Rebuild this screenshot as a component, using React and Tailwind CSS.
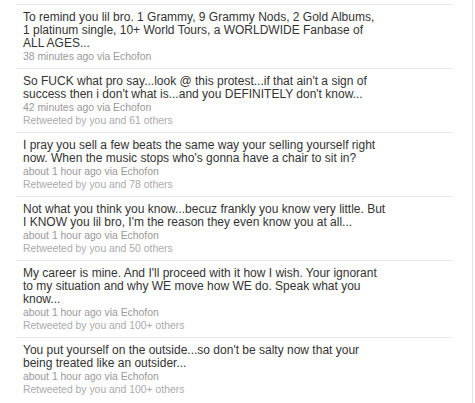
const tweets = [
  {
    lines: [
      'To remind you lil bro. 1 Grammy, 9 Grammy Nods, 2 Gold Albums,',
      '1 platinum single, 10+ World Tours, a WORLDWIDE Fanbase of',
      'ALL AGES...',
    ],
    meta: '38 minutes ago via Echofon',
  },
  {
    lines: [
      "So FUCK what pro say...look @ this protest...if that ain't a sign of",
      "success then i don't what is...and you DEFINITELY don't know...",
    ],
    meta: '42 minutes ago via Echofon',
    rt: 'Retweeted by you and 61 others',
  },
  {
    lines: [
      'I pray you sell a few beats the same way your selling yourself right',
      "now. When the music stops who's gonna have a chair to sit in?",
    ],
    meta: 'about 1 hour ago via Echofon',
    rt: 'Retweeted by you and 78 others',
  },
  {
    lines: [
      'Not what you think you know...becuz frankly you know very little. But',
      "I KNOW you lil bro, I'm the reason they even know you at all...",
    ],
    meta: 'about 1 hour ago via Echofon',
    rt: 'Retweeted by you and 50 others',
  },
  {
    lines: [
      "My career is mine. And I'll proceed with it how I wish. Your ignorant",
      'to my situation and why WE move how WE do. Speak what you',
      'know...',
    ],
    meta: 'about 1 hour ago via Echofon',
    rt: 'Retweeted by you and 100+ others',
  },
  {
    lines: [
      "You put yourself on the outside...so don't be salty now that your",
      'being treated like an outsider...',
    ],
    meta: 'about 1 hour ago via Echofon',
    rt: 'Retweeted by you and 100+ others',
  },
];

function Tweet({ lines, meta, rt }) {
  return (
    <li className="border-t border-[#e8e8e8] pt-[6px] pb-[5px] px-[7px]">
      <p className="text-[12px] leading-[13px] text-[#333]">
        {lines.map((l, i) => (
          <span key={i} className="block whitespace-nowrap">{l}</span>
        ))}
      </p>
      <p className="text-[10.4px] leading-[13px] text-[#999]">{meta}</p>
      {rt && <p className="text-[10.4px] leading-[13px] text-[#aaa]">{rt}</p>}
    </li>
  );
}

export default function App() {
  return (
    <div className="w-[475px] h-[403px] bg-white overflow-hidden flex font-['Liberation_Sans',Arial,sans-serif]">
      <div className="flex-1 pl-[16px] pr-[20px] pt-[4px]">
        <ul>
          {tweets.map((t, i) => (
            <Tweet key={i} {...t} />
          ))}
        </ul>
      </div>
      <div className="w-[1px] bg-[#e2e2e2] mr-[2px]" />
    </div>
  );
}
